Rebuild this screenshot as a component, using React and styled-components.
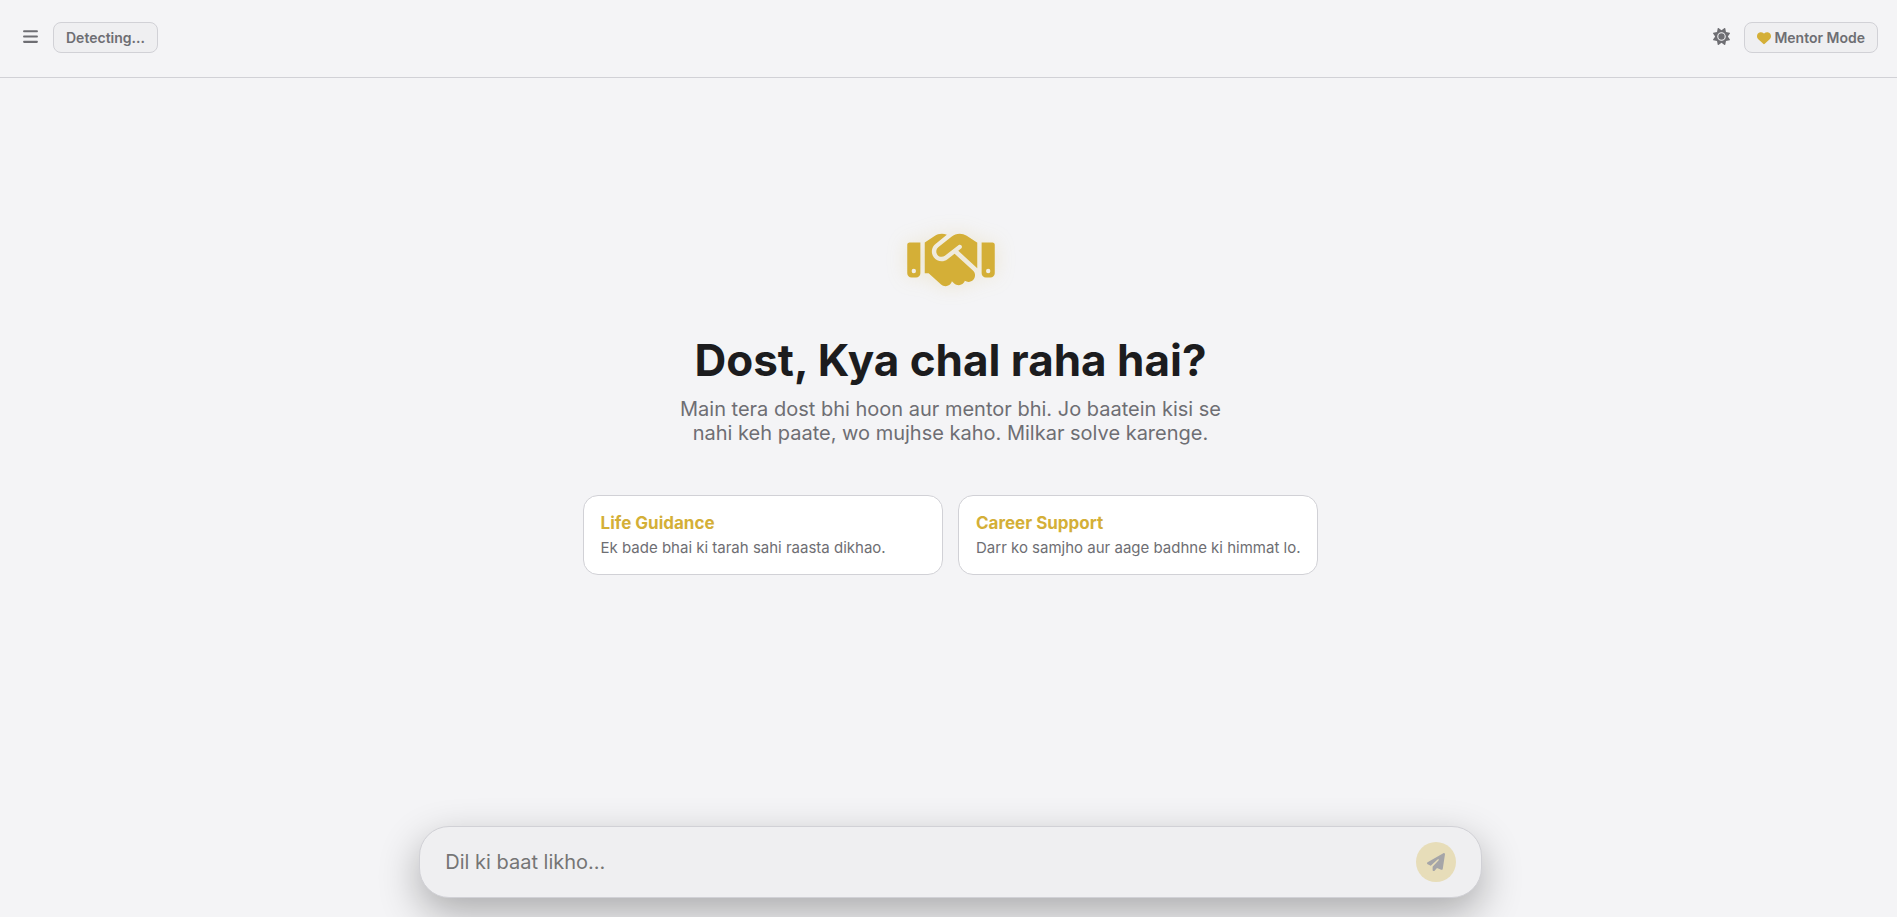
import { useState } from 'react'
import styled, { createGlobalStyle } from 'styled-components'
import { FaBars, FaHandshake, FaHeart, FaPaperPlane, FaSun } from 'react-icons/fa6'

const GlobalStyle = createGlobalStyle`
  * {
    box-sizing: border-box;
    margin: 0;
    padding: 0;
  }
  body {
    background: #f4f4f6;
    color: #1c1c1e;
    font-family: Inter, sans-serif;
  }
`

const Page = styled.div`
  display: flex;
  flex-direction: column;
  min-height: 100vh;
`

const Header = styled.header`
  display: flex;
  justify-content: space-between;
  align-items: flex-start;
  padding: 22px 19px 24px 22px;
  border-bottom: 1px solid #d1d1d6;
`

const Group = styled.div`
  display: flex;
  align-items: center;
  gap: 14px;
`

const IconButton = styled.button`
  display: flex;
  padding-bottom: 2px;
  border: none;
  background: none;
  color: #6e6e73;
  font-size: 17px;
  cursor: pointer;
`

const Chip = styled.button`
  display: flex;
  align-items: center;
  gap: 3px;
  padding: 6px 12px;
  border: 1px solid #d1d1d6;
  border-radius: 8px;
  background: #efeff1;
  color: #6e6e73;
  font: 600 14px/17px Inter, sans-serif;
  cursor: pointer;

  svg {
    color: #d4af37;
  }
`

const Content = styled.div`
  flex: 1;
  display: flex;
  flex-direction: column;
  align-items: center;
  padding-left: 4px;
`

const Main = styled.main`
  flex: 1;
  display: flex;
  flex-direction: column;
  align-items: center;
  justify-content: center;
  padding: 20px 20px 125px;
`

const Logo = styled.div`
  display: flex;
  margin-bottom: 39px;
  color: #d4af37;
  filter: drop-shadow(0 0 10px rgba(212, 175, 55, 0.2));

  svg {
    width: 88px;
    height: 70px;
  }
`

const Title = styled.h1`
  margin-bottom: 10px;
  font-size: 44px;
  font-weight: 700;
  line-height: 53px;
  text-align: center;
`

const Subtitle = styled.p`
  max-width: 550px;
  margin-bottom: 50px;
  color: #6e6e73;
  font-size: 20px;
  line-height: 24px;
  text-align: center;
`

const Cards = styled.div`
  display: grid;
  grid-template-columns: 1fr 1fr;
  gap: 15px;
`

const Card = styled.button`
  padding: 16px 17px 17px;
  border: 1px solid #d1d1d6;
  border-radius: 15px;
  background: #fff;
  font-family: inherit;
  text-align: left;
  cursor: pointer;
`

const CardTitle = styled.strong`
  display: block;
  margin-bottom: 4px;
  color: #d4af37;
  font-size: 17px;
  font-weight: 700;
  line-height: 22px;
`

const CardText = styled.span`
  display: block;
  color: #6e6e73;
  font-size: 15px;
  line-height: 19px;
`

const Composer = styled.form`
  display: flex;
  align-items: center;
  width: 56vw;
  margin-bottom: 19px;
  padding: 15px 25px;
  border: 1px solid #d1d1d6;
  border-radius: 30px;
  background: #efeff1;
  box-shadow: 0 15px 40px rgba(0, 0, 0, 0.3);
`

const Input = styled.input`
  flex: 1;
  min-width: 0;
  border: none;
  outline: none;
  background: none;
  color: #1c1c1e;
  font: 400 20px/24px Inter, sans-serif;

  &::placeholder {
    color: #757575;
  }
`

const Send = styled.button`
  display: flex;
  align-items: center;
  justify-content: center;
  width: 40px;
  height: 40px;
  border: none;
  border-radius: 50%;
  background: #d4af37;
  color: #1c1c1e;
  font-size: 18px;
  cursor: pointer;

  &:disabled {
    background: #e7ddb9;
    color: #a5a5a8;
  }
`

const cards = [
  { title: 'Life Guidance', text: 'Ek bade bhai ki tarah sahi raasta dikhao.' },
  { title: 'Career Support', text: 'Darr ko samjho aur aage badhne ki himmat lo.' },
]

const App = () => {
  const [message, setMessage] = useState('')

  const send = (e) => {
    e.preventDefault()
    setMessage('')
  }

  return (
    <Page>
      <GlobalStyle />
      <Header>
        <Group>
          <IconButton type="button" aria-label="Menu"><FaBars /></IconButton>
          <Chip type="button">Detecting...</Chip>
        </Group>
        <Group>
          <IconButton type="button" aria-label="Theme"><FaSun /></IconButton>
          <Chip type="button"><FaHeart />Mentor Mode</Chip>
        </Group>
      </Header>
      <Content>
        <Main>
          <Logo><FaHandshake /></Logo>
          <Title>Dost, Kya chal raha hai?</Title>
          <Subtitle>
            Main tera dost bhi hoon aur mentor bhi. Jo baatein kisi se nahi keh paate, wo mujhse kaho. Milkar solve karenge.
          </Subtitle>
          <Cards>
            {cards.map((card) => (
              <Card type="button" key={card.title} onClick={() => setMessage(card.title)}>
                <CardTitle>{card.title}</CardTitle>
                <CardText>{card.text}</CardText>
              </Card>
            ))}
          </Cards>
        </Main>
        <Composer onSubmit={send}>
          <Input
            aria-label="Message"
            placeholder="Dil ki baat likho..."
            value={message}
            onChange={(e) => setMessage(e.target.value)}
          />
          <Send type="submit" aria-label="Send" disabled={!message}><FaPaperPlane /></Send>
        </Composer>
      </Content>
    </Page>
  )
}

export default App
